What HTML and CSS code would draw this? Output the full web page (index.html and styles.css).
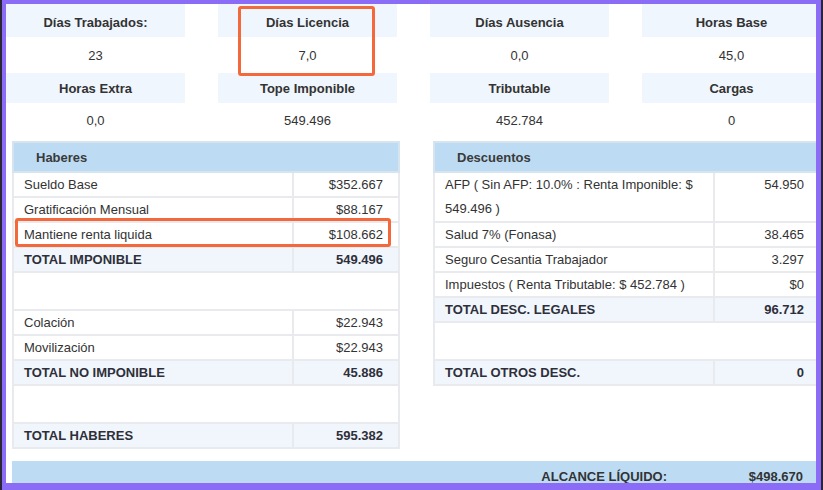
FILE: index.html
```html
<!DOCTYPE html>
<html lang="es">
<head>
<meta charset="utf-8">
<title>Liquidación</title>
<link rel="stylesheet" href="styles.css">
</head>
<body>
<div class="frame">
  <div class="screen">
    <div class="page">
      <div class="stats-wrap">
        <div class="stats">
          <div class="stat-h first">Días Trabajados:</div>
          <div class="stat-h first">Días Licencia</div>
          <div class="stat-h first">Días Ausencia</div>
          <div class="stat-h first">Horas Base</div>
          <div class="stat-v">23</div>
          <div class="stat-v">7,0</div>
          <div class="stat-v">0,0</div>
          <div class="stat-v">45,0</div>
          <div class="stat-h">Horas Extra</div>
          <div class="stat-h">Tope Imponible</div>
          <div class="stat-h">Tributable</div>
          <div class="stat-h">Cargas</div>
          <div class="stat-v">0,0</div>
          <div class="stat-v">549.496</div>
          <div class="stat-v">452.784</div>
          <div class="stat-v">0</div>
        </div>
        <div class="mark mark-licencia"></div>
      </div>

      <div class="tables">
        <div class="table-wrap">
          <table class="liq">
            <colgroup><col class="col-lbl"><col class="col-val"></colgroup>
            <thead>
              <tr><th colspan="2">Haberes</th></tr>
            </thead>
            <tbody>
              <tr><td class="lbl">Sueldo Base</td><td class="val">$352.667</td></tr>
              <tr><td class="lbl">Gratificación Mensual</td><td class="val">$88.167</td></tr>
              <tr><td class="lbl">Mantiene renta liquida</td><td class="val">$108.662</td></tr>
              <tr class="total"><td class="lbl">TOTAL IMPONIBLE</td><td class="val">549.496</td></tr>
              <tr class="spacer"><td colspan="2"></td></tr>
              <tr><td class="lbl">Colación</td><td class="val">$22.943</td></tr>
              <tr><td class="lbl">Movilización</td><td class="val">$22.943</td></tr>
              <tr class="total"><td class="lbl">TOTAL NO IMPONIBLE</td><td class="val">45.886</td></tr>
              <tr class="spacer"><td colspan="2"></td></tr>
              <tr class="total"><td class="lbl">TOTAL HABERES</td><td class="val">595.382</td></tr>
            </tbody>
          </table>
          <div class="mark mark-renta"></div>
        </div>

        <div class="table-wrap">
          <table class="liq">
            <colgroup><col class="col-lbl"><col class="col-val"></colgroup>
            <thead>
              <tr><th colspan="2">Descuentos</th></tr>
            </thead>
            <tbody>
              <tr class="tall"><td class="lbl">AFP ( Sin AFP: 10.0% : Renta Imponible: $ 549.496 )</td><td class="val">54.950</td></tr>
              <tr><td class="lbl">Salud 7% (Fonasa)</td><td class="val">38.465</td></tr>
              <tr><td class="lbl">Seguro Cesantia Trabajador</td><td class="val">3.297</td></tr>
              <tr><td class="lbl">Impuestos ( Renta Tributable: $ 452.784 )</td><td class="val">$0</td></tr>
              <tr class="total"><td class="lbl">TOTAL DESC. LEGALES</td><td class="val">96.712</td></tr>
              <tr class="spacer"><td colspan="2"></td></tr>
              <tr class="total"><td class="lbl">TOTAL OTROS DESC.</td><td class="val">0</td></tr>
            </tbody>
          </table>
        </div>
      </div>

      <div class="alcance">
        <span class="alcance-lbl">ALCANCE LÍQUIDO:</span>
        <span class="alcance-val">$498.670</span>
      </div>
    </div>
  </div>
</div>
</body>
</html>
```

FILE: styles.css
```css
html, body {
  margin: 0;
  padding: 0;
  background: #ffffff;
}

.frame {
  width: 823px;
  height: 490px;
  box-sizing: border-box;
  border-left: 2px solid #2a2634;
  border-right: 2px solid #2a2634;
}

.screen {
  height: 100%;
  box-sizing: border-box;
  border-style: solid;
  border-color: #8b6cf6;
  border-width: 4px 5px 7px 4px;
  overflow: hidden;
  background: #ffffff;
}

.page {
  width: 830px;
  font-family: "Liberation Sans", Arial, sans-serif;
  font-size: 13px;
  color: #333333;
}

/* ---------- top stats ---------- */
.stats-wrap {
  position: relative;
}

.stats {
  display: grid;
  grid-template-columns: repeat(4, 179px);
  grid-template-rows: 33px 36px 30px 35px;
  column-gap: 33px;
}

.stat-h {
  background: #eff6fd;
  font-weight: bold;
  display: flex;
  align-items: center;
  justify-content: center;
  color: #333333;
}

.stat-h.first {
  padding-top: 3px;
}

.stat-v {
  display: flex;
  align-items: center;
  justify-content: center;
}

.mark {
  position: absolute;
  border: 3px solid #f4693b;
  border-radius: 3px;
  box-sizing: border-box;
  pointer-events: none;
}

.mark-licencia {
  left: 232px;
  top: 2px;
  width: 137px;
  height: 70px;
}

/* ---------- tables ---------- */
.tables {
  display: flex;
  align-items: flex-start;
  gap: 35px;
  margin-top: 3px;
  padding-left: 6px;
}

.table-wrap {
  position: relative;
  width: 386px;
  flex: none;
}

.liq {
  width: 386px;
  border-collapse: collapse;
  table-layout: fixed;
  border: 2px solid #dfe7ef;
}

.col-lbl {
  width: 280px;
}

.col-val {
  width: 106px;
}

.liq th {
  height: 28px;
  padding: 0 0 0 22px;
  background: #bddcf3;
  text-align: left;
  font-weight: bold;
  color: #3a3a3a;
  border: 2px solid #d6e4f0;
}

.liq td {
  line-height: 23px;
  padding: 0;
  border: 2px solid #e8eaed;
  vertical-align: top;
}

.liq td.lbl {
  padding-left: 10px;
}

.liq td.val {
  text-align: right;
  padding-right: 15px;
}

.liq tr.tall td {
  line-height: 24px;
}

.liq tr.total td {
  background: #f0f6fc;
  font-weight: bold;
  color: #2f2f3a;
}

.liq tr.spacer td {
  height: 36px;
  padding: 0;
}

.mark-renta {
  left: 3px;
  top: 77px;
  width: 376px;
  height: 29px;
}

/* ---------- bottom bar ---------- */
.alcance {
  display: flex;
  justify-content: flex-end;
  align-items: center;
  margin-top: 12px;
  margin-left: 6px;
  width: 806px;
  height: 30px;
  background: #bddcf3;
  font-weight: bold;
  color: #333333;
}

.alcance-lbl {
  margin-right: 45px;
}

.alcance-val {
  width: 91px;
  text-align: right;
  padding-right: 15px;
}
```
